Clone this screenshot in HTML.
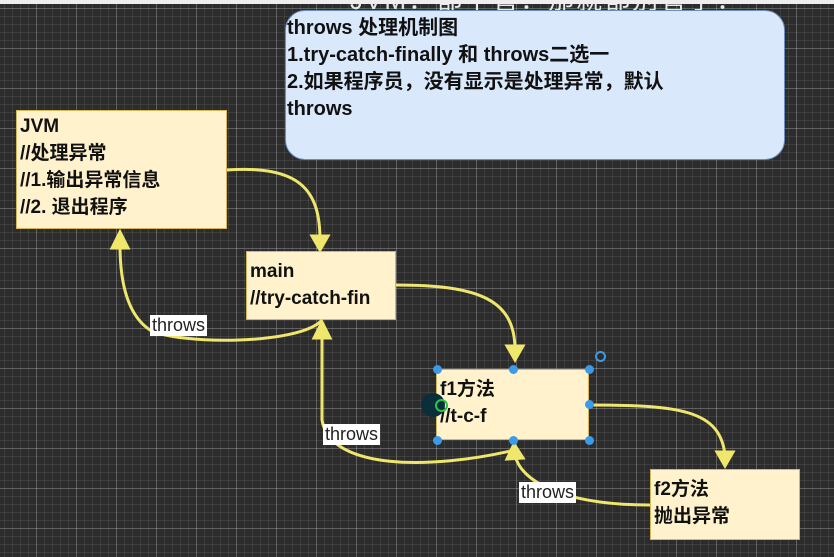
<!DOCTYPE html>
<html><head><meta charset="utf-8"><style>
html,body{margin:0;padding:0}
body{width:834px;height:557px;overflow:hidden;position:relative;background:#2c2c2c;
background-image:linear-gradient(rgba(255,255,255,.18) 1px,transparent 1px),linear-gradient(90deg,rgba(255,255,255,.18) 1px,transparent 1px),linear-gradient(rgba(255,255,255,.08) 1px,transparent 1px),linear-gradient(90deg,rgba(255,255,255,.08) 1px,transparent 1px);
background-size:40px 40px,40px 40px,8px 8px,8px 8px;background-position:-4px 8px,-4px 8px,-4px 0,-4px 0;
font-family:"Liberation Sans","Noto Sans CJK SC",sans-serif;font-weight:bold;color:#111}
.top{position:absolute;left:0;top:0;width:834px;height:4px;background:#eee}
.ttl{position:absolute;left:350px;top:-20px;font-size:26px;color:#e8e8e8;font-weight:normal;white-space:nowrap;letter-spacing:2px}
.b{position:absolute;background:#fff2cc;border:1px solid #d6b656;box-sizing:border-box;font-size:19px;line-height:27px;padding:2px 3px}
.blue{position:absolute;left:285px;top:10px;width:500px;height:150px;background:#dae8fc;border:1px solid #6c8ebf;border-radius:20px;box-sizing:border-box;font-size:20px;line-height:27px;padding:4px 1px}
.lbl{position:absolute;background:#fff;font-size:18px;font-weight:normal;color:#222;line-height:21px;padding:0 2px}
svg{position:absolute;left:0;top:0}
.h{position:absolute;width:9px;height:9px;border-radius:50%;background:#3a9bea;margin:-4px 0 0 -4px}
</style></head><body>
<div class="ttl">JVM：都不管：那就都别管了：</div>
<div class="top"></div>
<div class="blue">throws 处理机制图<br>1.try-catch-finally 和 throws二选一<br>2.如果程序员，没有显示是处理异常，默认<br>throws</div>
<div class="b" style="left:16px;top:110px;width:211px;height:119px">JVM<br>//处理异常<br>//1.输出异常信息<br>//2. 退出程序</div>
<div class="b" style="left:246px;top:251px;width:150px;height:69px;padding-top:6px">main<br>//try-catch-fin</div>
<div class="b" style="left:436px;top:369px;width:153px;height:71px;padding-top:6px">f1方法<br>//t-c-f</div>
<div class="b" style="left:650px;top:469px;width:150px;height:71px;padding-top:6px">f2方法<br>抛出异常</div>
<svg width="834" height="557" fill="none" stroke="#efe76c" stroke-width="3">
<path d="M227 170 C300 165 320 190 320 240"/><path d="M312 236 L320 250 L328 236Z" fill="#efe76c"/>
<path d="M396 285 C480 285 515 300 515 350"/><path d="M507 346 L515 360 L523 346Z" fill="#efe76c"/>
<path d="M589 405 C680 405 720 410 725 455"/><path d="M717 452 L725 466 L733 452Z" fill="#efe76c"/>
<path d="M650 505 C560 505 520 480 515 455"/><path d="M507 459 L514 444 L523 458Z" fill="#efe76c"/>
<path d="M515 450 C430 470 330 470 322 420 L322 335"/><path d="M314 338 L322 322 L330 338Z" fill="#efe76c"/>
<path d="M322 320 C300 345 180 345 150 330 C120 310 120 260 120 245"/><path d="M112 248 L120 232 L128 248Z" fill="#efe76c"/>
</svg>
<div class="lbl" style="left:150px;top:315px">throws</div>
<div class="lbl" style="left:323px;top:424px">throws</div>
<div class="lbl" style="left:519px;top:482px">throws</div>
<div class="h" style="left:437px;top:369px"></div><div class="h" style="left:513px;top:369px"></div><div class="h" style="left:589px;top:369px"></div>
<div class="h" style="left:589px;top:404px"></div>
<div class="h" style="left:437px;top:440px"></div><div class="h" style="left:513px;top:440px"></div><div class="h" style="left:589px;top:440px"></div>
<div style="position:absolute;left:421px;top:393px;width:24px;height:24px;border-radius:50%;background:#0b2f3a"></div>
<div style="position:absolute;left:435px;top:399px;width:9px;height:9px;border-radius:50%;border:2px solid #2bc44a"></div>
<div style="position:absolute;left:595px;top:351px;width:7px;height:7px;border-radius:50%;border:2px solid #3a9bea"></div>
</body></html>
